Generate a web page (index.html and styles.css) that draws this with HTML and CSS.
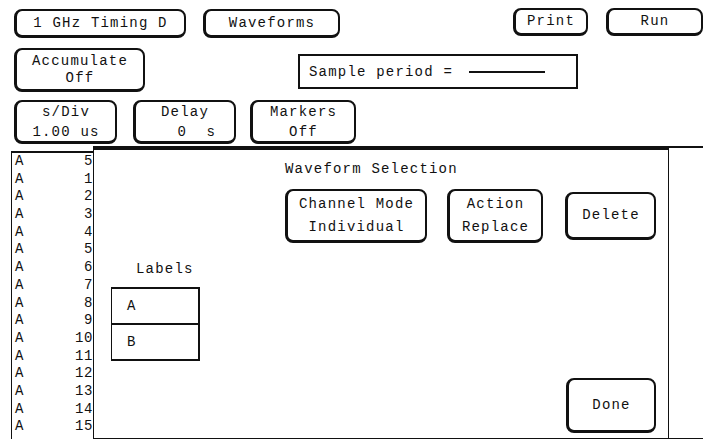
FILE: index.html
```html
<!DOCTYPE html>
<html lang="en">
<head>
  <meta charset="UTF-8">
  <title>Waveform Selection</title>
  <link rel="stylesheet" href="styles.css">
</head>
<body>

  <div class="row row-top">
    <div class="key key-mode">1 GHz Timing D</div>
    <div class="key key-menu">Waveforms</div>
    <div class="key key-print">Print</div>
    <div class="key key-run">Run</div>
  </div>

  <div class="row row-mid">
    <div class="key key-acc"><span>Accumulate</span><span>Off</span></div>
    <div class="readout">Sample period = <span class="dash"></span></div>
  </div>

  <div class="row row-low">
    <div class="key key-div"><span>s/Div</span><span>1.00 us</span></div>
    <div class="key key-delay"><span>Delay</span><span class="val-right">0  s</span></div>
    <div class="key key-markers"><span>Markers</span><span>Off</span></div>
  </div>

  <div class="main">
    <ul class="chan-list">
      <li><span>A</span><span>5</span></li>
      <li><span>A</span><span>1</span></li>
      <li><span>A</span><span>2</span></li>
      <li><span>A</span><span>3</span></li>
      <li><span>A</span><span>4</span></li>
      <li><span>A</span><span>5</span></li>
      <li><span>A</span><span>6</span></li>
      <li><span>A</span><span>7</span></li>
      <li><span>A</span><span>8</span></li>
      <li><span>A</span><span>9</span></li>
      <li><span>A</span><span>10</span></li>
      <li><span>A</span><span>11</span></li>
      <li><span>A</span><span>12</span></li>
      <li><span>A</span><span>13</span></li>
      <li><span>A</span><span>14</span></li>
      <li><span>A</span><span>15</span></li>
    </ul>

    <div class="display">
      <div class="dialog">
        <div class="dlg-title">Waveform Selection</div>

        <div class="dlg-keys">
          <div class="key key-chan"><span>Channel Mode</span><span>Individual</span></div>
          <div class="key key-action"><span>Action</span><span>Replace</span></div>
          <div class="key key-delete">Delete</div>
        </div>

        <div class="labels">
          <div class="labels-title">Labels</div>
          <div class="labels-box">
            <div class="label-cell">A</div>
            <div class="label-cell">B</div>
          </div>
        </div>

        <div class="dlg-foot">
          <div class="key key-done">Done</div>
        </div>
      </div>
    </div>
  </div>

</body>
</html>
```

FILE: styles.css
```css
/* Screen */
body {
  margin: 0;
  width: 703px;
  height: 439px;
  overflow: hidden;
  background-color: #fff;
  color: #111;
  font-family: "Liberation Mono", "DejaVu Sans Mono", monospace;
  font-size: 14px;
  letter-spacing: 1.2px;
}

.row {
  display: flex;
  align-items: flex-start;
  padding-left: 14px;
}

/* Softkeys: rounded box with a heavy left/bottom edge */
.key {
  box-sizing: border-box;
  display: flex;
  flex-direction: column;
  align-items: center;
  justify-content: center;
  border: solid #111;
  border-width: 2px 2px 3px 3px;
  border-radius: 8px;
  line-height: 17px;
  white-space: pre;
}

/* Top row */
.row-top {
  padding-top: 8px;
}

.key-mode {
  width: 172px;
  height: 29px;
  margin-top: 1px;
}

.key-menu {
  width: 137px;
  height: 29px;
  margin-top: 1px;
  margin-left: 17px;
}

.key-print {
  width: 75px;
  height: 28px;
  margin-left: auto;
}

.key-run {
  width: 97px;
  height: 28px;
  margin-left: 18px;
}

/* Second row */
.row-mid {
  margin-top: 10px;
  align-items: center;
}

.key-acc {
  width: 131px;
  height: 44px;
}

.readout {
  box-sizing: border-box;
  display: flex;
  align-items: center;
  width: 280px;
  height: 35px;
  margin-left: 153px;
  margin-top: 3px;
  padding-left: 9px;
  border: 2px solid #111;
  white-space: pre;
}

.dash {
  display: inline-block;
  width: 76px;
  margin-left: 6px;
  border-top: 2px solid #111;
}

/* Third row */
.row-low {
  margin-top: 8px;
}

.row-low .key {
  height: 44px;
  line-height: 20px;
}

.key-div {
  width: 103px;
}

.key-delay {
  width: 103px;
  margin-left: 16px;
}

.key-delay .val-right {
  align-self: flex-end;
  padding-right: 18px;
}

.key-markers {
  width: 106px;
  margin-left: 14px;
}

/* Waveform area */
.main {
  display: flex;
  margin-top: 2px;
  height: 294px;
}

.chan-list {
  box-sizing: border-box;
  width: 82px;
  margin: 5px 0 0 11px;
  padding: 0 0 0 3px;
  list-style: none;
  border-top: 2px solid #111;
  border-left: 1px solid #111;
}

.chan-list li {
  display: flex;
  justify-content: space-between;
  height: 17.7px;
  line-height: 17.7px;
  letter-spacing: 0.6px;
}

.display {
  box-sizing: border-box;
  flex: 1;
  height: 293px;
  border-top: 2px solid #111;
  border-bottom: 1px solid #111;
}

/* Dialog */
.dialog {
  box-sizing: border-box;
  display: flex;
  flex-direction: column;
  width: 576px;
  height: 100%;
  border: 1px solid #111;
  border-top-width: 2px;
  border-bottom: none;
  background-color: #fff;
}

.dlg-title {
  margin: 11px 0 0 191px;
  line-height: 16px;
}

.dlg-keys {
  display: flex;
  align-items: center;
  margin: 12px 0 0 191px;
}

.dlg-keys .key {
  line-height: 23px;
}

.key-chan {
  width: 142px;
  height: 54px;
}

.key-action {
  width: 96px;
  height: 54px;
  margin-left: 20px;
}

.key-delete {
  width: 91px;
  height: 48px;
  margin-left: 22px;
}

/* Labels table */
.labels {
  margin: 18px 0 0 17px;
}

.labels-title {
  padding-left: 25px;
  line-height: 16px;
}

.labels-box {
  box-sizing: border-box;
  width: 89px;
  margin-top: 10px;
  border: 2px solid #111;
  border-left-width: 1px;
}

.label-cell {
  height: 34px;
  line-height: 34px;
  padding-left: 15px;
}

.label-cell + .label-cell {
  border-top: 2px solid #111;
}

.dlg-foot {
  display: flex;
  justify-content: flex-end;
  margin-top: auto;
  padding: 0 12px 5px 0;
}

.key-done {
  width: 90px;
  height: 55px;
}
```
